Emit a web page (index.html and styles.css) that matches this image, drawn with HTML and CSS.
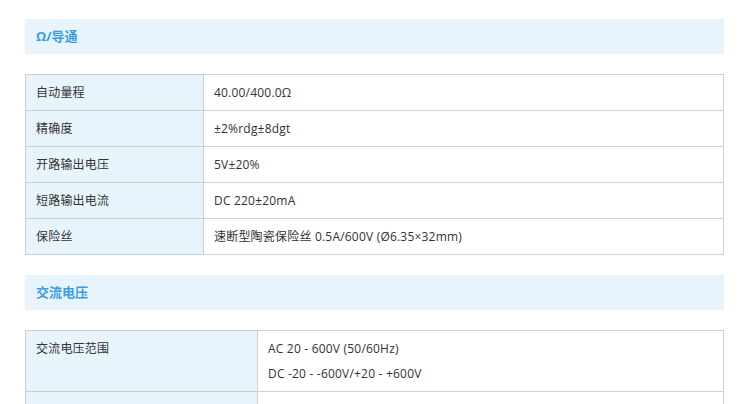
FILE: index.html
```html
<!DOCTYPE html>
<html lang="zh-CN">
<head>
    <meta charset="UTF-8">
    <meta name="viewport" content="width=device-width, initial-scale=1.0">
    <title>规格参数</title>
    <link rel="stylesheet" href="styles.css">
</head>
<body>
    <div class="container">
        <!-- 电阻 / 导通 -->
        <h3 class="section-title">Ω/导通</h3>
        <table class="spec-table spec-narrow">
            <tr><td class="name">自动量程</td><td>40.00/400.0Ω</td></tr>
            <tr><td class="name">精确度</td><td>±2%rdg±8dgt</td></tr>
            <tr><td class="name">开路输出电压</td><td>5V±20%</td></tr>
            <tr><td class="name">短路输出电流</td><td>DC 220±20mA</td></tr>
            <tr><td class="name">保险丝</td><td>速断型陶瓷保险丝 0.5A/600V (Ø6.35×32mm)</td></tr>
        </table>

        <!-- 交流电压 -->
        <h3 class="section-title">交流电压</h3>
        <table class="spec-table spec-wide">
            <tr>
                <td class="name">交流电压范围</td>
                <td>AC 20 - 600V (50/60Hz)<br>DC -20 - -600V/+20 - +600V</td>
            </tr>
            <tr><td class="name"></td><td></td></tr>
        </table>
    </div>
</body>
</html>
```

FILE: styles.css
```css
body {
    margin: 0;
    font-family: "Open Sans", "Noto Sans CJK SC", sans-serif;
    font-size: 12px;
    color: #333;
    background: #fff;
}
.container {
    width: 699px;
    padding: 19px 0 0 25px;
}
.section-title {
    margin: 0 0 20px;
    height: 35px;
    line-height: 35px;
    padding-left: 11px;
    background-color: #e8f4fc;
    color: #3a9de2;
    font-size: 13px;
    font-weight: bold;
}
.spec-table {
    width: 699px;
    border-collapse: collapse;
    margin-bottom: 20px;
}
.spec-table td {
    border: 1px solid #cfcfcf;
    padding: 5px 10px;
    height: 25px;
    line-height: 25px;
    letter-spacing: 0.2px;
    vertical-align: top;
}
.spec-table td.name {
    background-color: #e8f4fc;
}
.spec-narrow td.name {
    width: 157px;
}
.spec-wide td.name {
    width: 211px;
}
```
